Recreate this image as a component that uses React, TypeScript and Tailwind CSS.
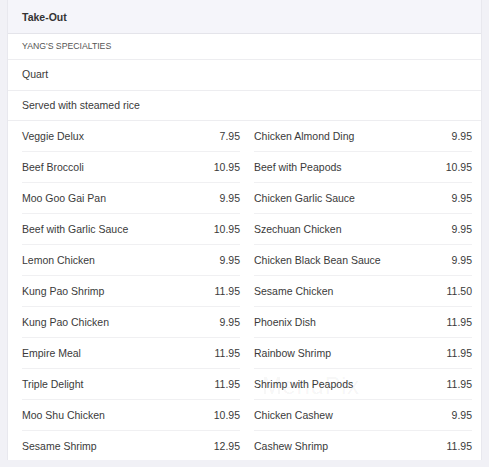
import React from 'react'

const left: [string, string][] = [
  ['Veggie Delux', '7.95'],
  ['Beef Broccoli', '10.95'],
  ['Moo Goo Gai Pan', '9.95'],
  ['Beef with Garlic Sauce', '10.95'],
  ['Lemon Chicken', '9.95'],
  ['Kung Pao Shrimp', '11.95'],
  ['Kung Pao Chicken', '9.95'],
  ['Empire Meal', '11.95'],
  ['Triple Delight', '11.95'],
  ['Moo Shu Chicken', '10.95'],
  ['Sesame Shrimp', '12.95'],
]

const right: [string, string][] = [
  ['Chicken Almond Ding', '9.95'],
  ['Beef with Peapods', '10.95'],
  ['Chicken Garlic Sauce', '9.95'],
  ['Szechuan Chicken', '9.95'],
  ['Chicken Black Bean Sauce', '9.95'],
  ['Sesame Chicken', '11.50'],
  ['Phoenix Dish', '11.95'],
  ['Rainbow Shrimp', '11.95'],
  ['Shrimp with Peapods', '11.95'],
  ['Chicken Cashew', '9.95'],
  ['Cashew Shrimp', '11.95'],
]

const Column = ({ items }: { items: [string, string][] }) => (
  <div className="flex flex-col">
    {items.map(([name, price], i) => (
      <div
        key={name}
        className={`flex items-center justify-between pt-[2px] ${
          i < items.length - 1 ? 'h-[31px] border-b border-[#f0f0f2]' : 'h-[29px]'
        }`}
      >
        <span>{name}</span>
        <span>{price}</span>
      </div>
    ))}
  </div>
)

export default function App() {
  return (
    <div
      className="relative h-[467px] w-[489px] overflow-hidden bg-[#f1f1f6] pl-[7px] pr-[7px] text-[10.5px] text-[#3a3a3a]"
      style={{ fontFamily: '"Liberation Sans", Arial, sans-serif' }}
    >
      <div className="border-x border-[#e8e8ee] bg-white">
        {/* header */}
        <div className="flex h-[34px] items-center border-b border-[#e4e4ea] bg-[#f5f5fa] pl-[14px] pt-[2px] font-semibold text-[#333]">
          Take-Out
        </div>
        <div className="flex h-[26px] items-center border-b border-[#ededf0] pl-[14px] text-[8.7px] uppercase text-[#555]">
          Yang's Specialties
        </div>
        <div className="flex h-[31px] items-center border-b border-[#ededf0] pl-[14px]">Quart</div>
        <div className="flex h-[30px] items-center border-b border-[#ededf0] pl-[14px]">
          Served with steamed rice
        </div>

        {/* items */}
        <div className="grid grid-cols-2 gap-x-[14px] pl-[14px] pr-[9px]">
          <Column items={left} />
          <Column items={right} />
        </div>
      </div>

      {/* watermark */}
      <div className="pointer-events-none absolute left-[262px] top-[368px] text-[24px] tracking-wide text-black/[0.05]">
        MenuPix
      </div>
    </div>
  )
}
